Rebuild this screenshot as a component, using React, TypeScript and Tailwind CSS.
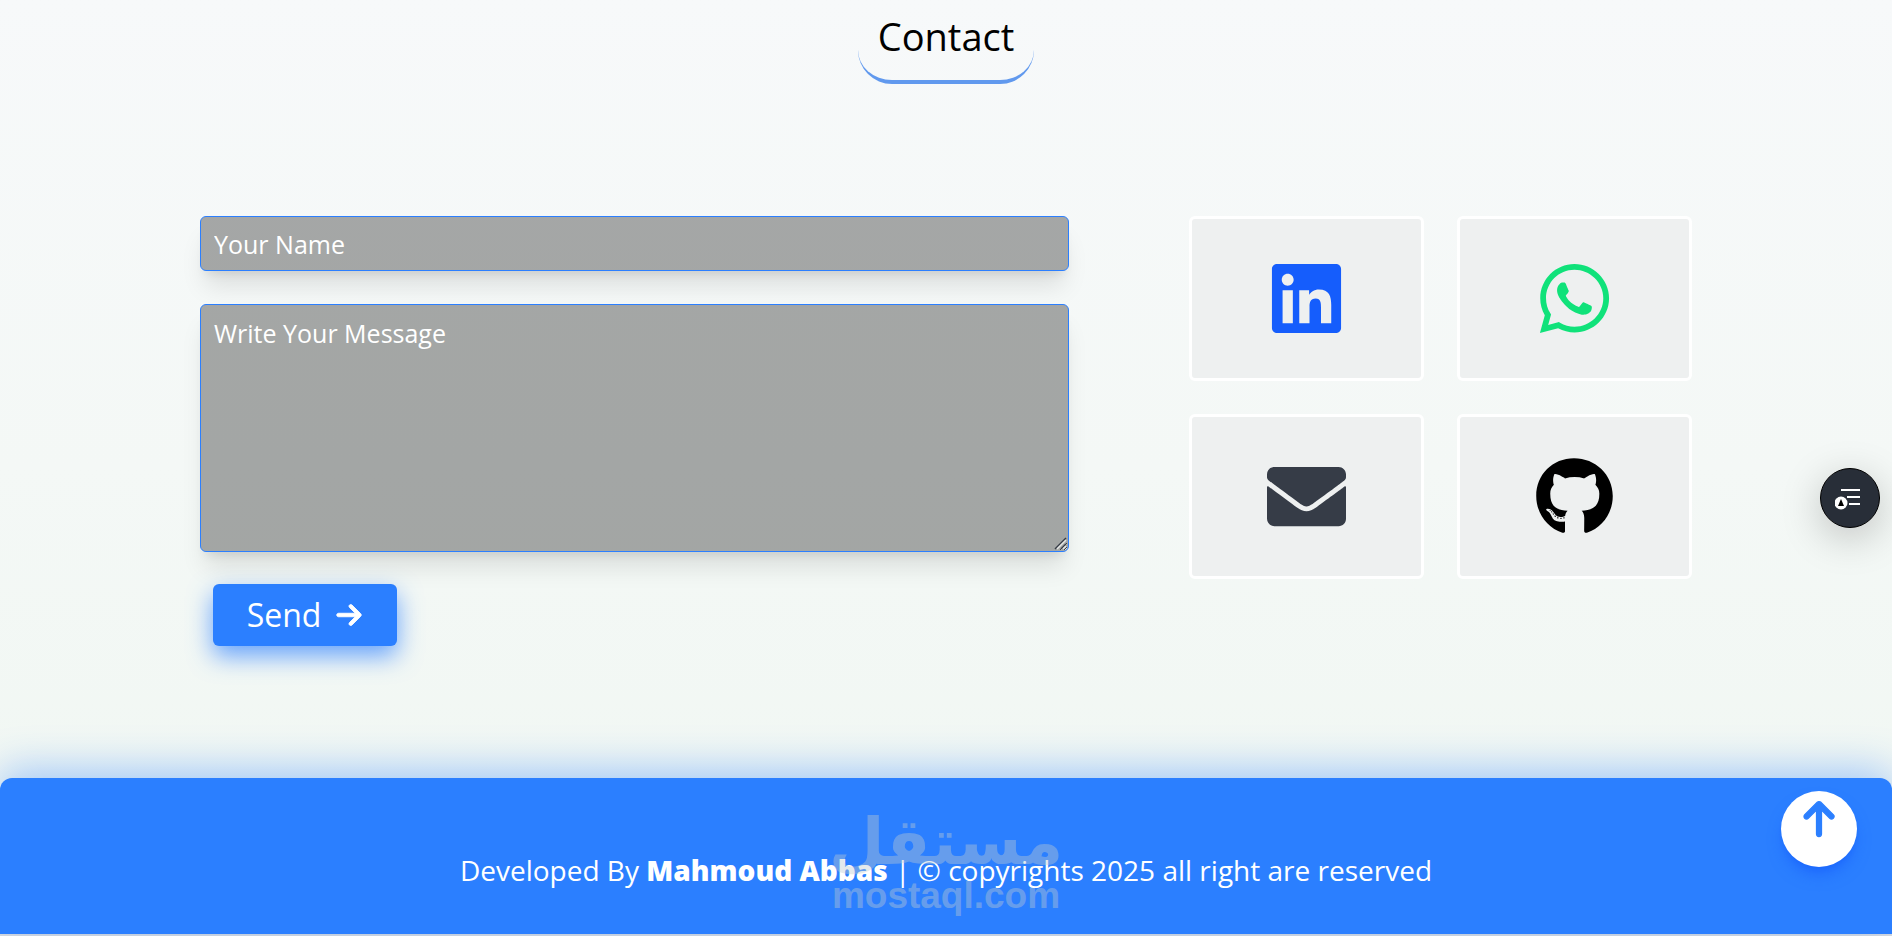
import type { ReactNode } from "react";
import { FaEnvelope, FaGithub, FaLinkedin, FaWhatsapp } from "react-icons/fa";
import { FaArrowRight, FaArrowUp } from "react-icons/fa6";

const socials = [
  { label: "LinkedIn", icon: <FaLinkedin />, color: "text-blue-600" },
  { label: "WhatsApp", icon: <FaWhatsapp />, color: "text-[#10e27a]" },
  { label: "Email", icon: <FaEnvelope />, color: "text-[#363c47]" },
  { label: "GitHub", icon: <FaGithub />, color: "text-black" },
];

export default function App() {
  return (
    <div className="flex min-h-screen flex-col bg-gradient-to-b from-[#f7f9fa] via-[#f4f8f6] to-[#f0f7f2] font-['Open_Sans','Noto_Sans',sans-serif]">
      <main className="flex-1 px-6 pb-32">
        <h2 className="mx-auto h-[84px] w-44 rounded-b-[34px] border-b-4 border-[#6199ee] pt-3 text-center text-[38px] leading-[48px] text-black">
          Contact
        </h2>
        <div className="mx-auto mt-[132px] grid max-w-[1492px] grid-cols-[19fr_11fr] items-start gap-30">
          <ContactForm />
          <div className="grid grid-cols-2 gap-[33px]">
            {socials.map((social) => (
              <SocialCard key={social.label} {...social} />
            ))}
          </div>
        </div>
      </main>
      <Footer />
      <button
        type="button"
        aria-label="Reading list"
        className="fixed top-[468px] right-3 flex size-15 items-center justify-center rounded-full border border-black bg-[#282e38] shadow-[0_10px_40px_rgba(0,0,0,0.22)]"
      >
        <ReaderIcon />
      </button>
      <button
        type="button"
        aria-label="Back to top"
        className="fixed right-[35px] bottom-[69px] flex size-19 justify-center rounded-full bg-white pt-2 text-[40px] text-blue-500 shadow-lg shadow-blue-600/60"
      >
        <FaArrowUp className="stroke-[16]" />
      </button>
    </div>
  );
}

function ContactForm() {
  return (
    <form className="flex flex-col items-start" onSubmit={(e) => e.preventDefault()}>
      <input
        type="text"
        aria-label="Your Name"
        placeholder="Your Name"
        className="h-[55px] w-full rounded-md border border-blue-500 bg-black/33 px-[13px] text-[25px] text-white shadow-xl placeholder:text-white"
      />
      <div className="relative mt-[33px] flex w-full">
        <textarea
          aria-label="Write Your Message"
          placeholder="Write Your Message"
          className="h-[248px] w-full rounded-md border border-blue-500 bg-black/33 px-[13px] py-3 text-[25px] leading-8 text-white shadow-xl placeholder:text-white"
        />
        <svg
          className="pointer-events-none absolute right-0.5 bottom-0.5"
          width="14"
          height="14"
          viewBox="0 0 14 14"
          fill="none"
          strokeWidth="1.500"
        >
          <path d="M2 13L13 2M8 13l5-5" stroke="#363c47" />
          <path d="M4 13l9-9M10 13l3-3" stroke="#e6e8e6" />
        </svg>
      </div>
      <button
        type="submit"
        className="mt-8 ml-[13px] flex h-[62px] w-46 items-center justify-center gap-3.5 rounded-md bg-blue-500 text-[32px] text-white shadow-[0_10px_24px_rgba(43,127,255,0.7)]"
      >
        Send
        <FaArrowRight className="size-7 stroke-[16]" />
      </button>
    </form>
  );
}

function SocialCard({ label, icon, color }: { label: string; icon: ReactNode; color: string }) {
  return (
    <a
      href="#"
      aria-label={label}
      className={`flex h-[165px] items-center justify-center rounded-md border-3 border-white bg-[#eef0f0] text-[79px] ${color}`}
    >
      {icon}
    </a>
  );
}

function Footer() {
  return (
    <footer className="border-b-2 border-[#dcdcdc]">
      <div className="relative flex h-39 items-center justify-center rounded-t-xl bg-blue-500 pt-7 shadow-[0_-8px_40px_rgba(43,127,255,0.4)]">
        <p className="text-center text-[28px] text-white">
          Developed By <strong className="font-extrabold">Mahmoud Abbas</strong> | © copyrights 2025 all right are
          reserved
        </p>
        <Watermark />
      </div>
    </footer>
  );
}

function Watermark() {
  return (
    <div className="pointer-events-none absolute inset-x-0 top-8 flex flex-col items-center font-bold text-[#c0ccd2] opacity-40">
      <span lang="ar" dir="rtl" className="font-['DejaVu_Sans',sans-serif] text-[64px] leading-[64px]">
        مستقل
      </span>
      <span className="font-['Liberation_Sans',sans-serif] text-[37px] leading-[44px]">mostaql.com</span>
    </div>
  );
}

function ReaderIcon() {
  return (
    <svg width="30" height="24" viewBox="0 0 30 24" fill="none">
      <path d="M6 4h19M12 11h13M14 18h11" stroke="white" strokeWidth="2" />
      <circle cx="6" cy="17" r="6.500" fill="white" />
      <path d="M6 13l3 7h-6z" fill="black" />
    </svg>
  );
}
